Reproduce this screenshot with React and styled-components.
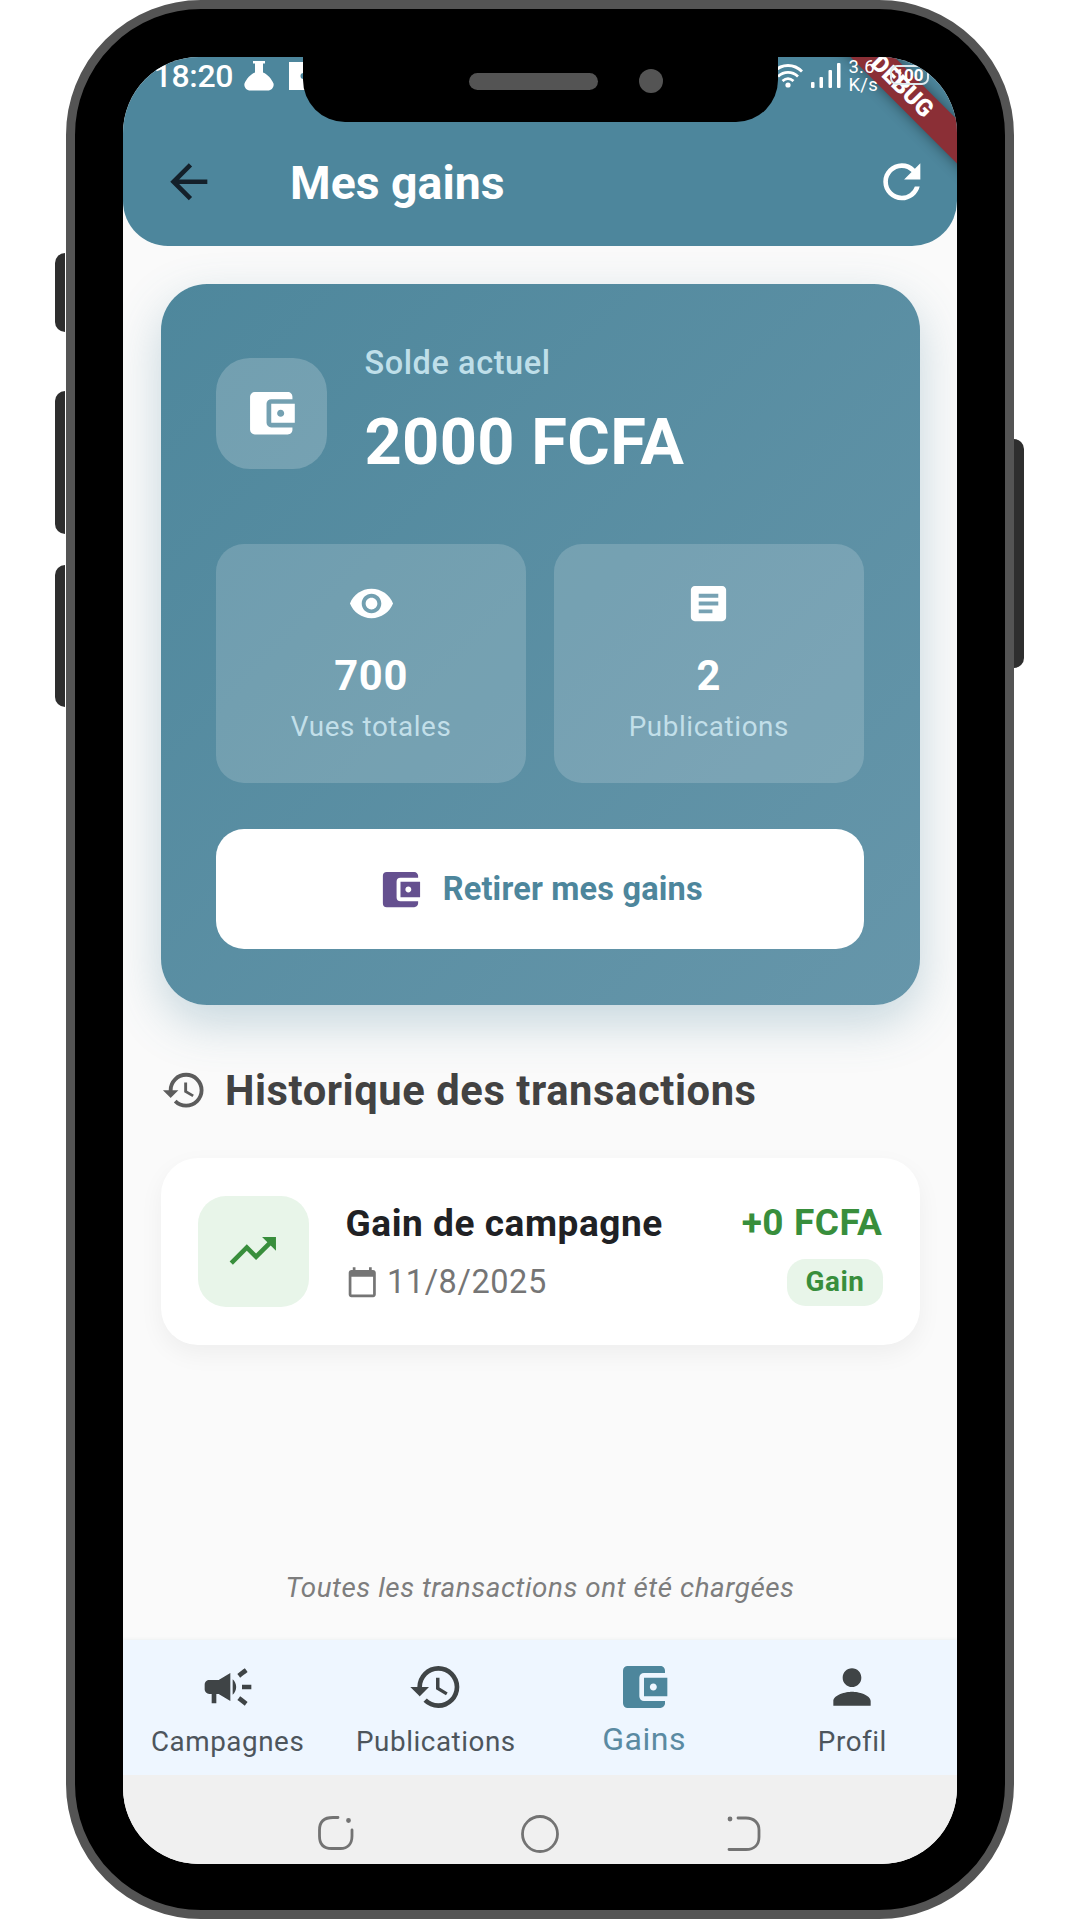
import React from "react";
import styled, { createGlobalStyle, css } from "styled-components";
import {
  MdAccountBalanceWallet,
  MdArrowBack,
  MdArticle,
  MdCalendarToday,
  MdCampaign,
  MdHistory,
  MdPerson,
  MdRefresh,
  MdTrendingUp,
  MdVisibility,
} from "react-icons/md";

const teal = "#4d869c";
const green = "#388e3c";
const mint = "#e8f5e9";

const GlobalStyle = createGlobalStyle`
  *, *::before, *::after { box-sizing: border-box; }
  body {
    margin: 0;
    background: #fff;
    font-family: Roboto, "Noto Sans", sans-serif;
    letter-spacing: 0.56px;
  }
  svg { display: block; flex: none; }
`;

const Page = styled.main`
  display: flex;
  justify-content: center;
  width: 1080px;
  height: 1920px;
  padding-right: 1px;
  overflow: hidden;
`;

const Phone = styled.div`
  position: relative;
  width: 948px;
  height: 1918.5px;
  padding: 47.5px 47px 45.5px 48px;
  border: 9.5px solid #545454;
  border-radius: 135px;
  background: #000;
`;

const SideKey = styled.span`
  position: absolute;
  top: ${(p) => p.$top}px;
  width: 10.5px;
  height: ${(p) => p.$height}px;
  background: #2e2e2e;
  ${(p) =>
    p.$side === "left"
      ? css`
          left: -20px;
          border-radius: 10px 0 0 10px;
        `
      : css`
          right: -19.5px;
          border-radius: 0 10px 10px 0;
        `}
`;

const Screen = styled.div`
  position: relative;
  display: flex;
  flex-direction: column;
  width: 834px;
  height: 1807px;
  border-radius: 76px;
  overflow: hidden;
  background: #fafafa;
`;

const Notch = styled.div`
  position: absolute;
  z-index: 3;
  top: -1px;
  left: 180px;
  display: flex;
  align-items: center;
  gap: 40.5px;
  width: 475px;
  height: 66.5px;
  padding: 0 0 15px 166px;
  border-radius: 0 0 42px 42px;
  background: #000;
`;

const Speaker = styled.span`
  width: 129.5px;
  height: 17px;
  border-radius: 9px;
  background: #545454;
`;

const Lens = styled.span`
  width: 24px;
  height: 24px;
  border-radius: 50%;
  background: #545454;
`;

const Header = styled.header`
  flex: none;
  height: 189px;
  border-radius: 0 0 45px 45px;
  background: ${teal};
`;

const StatusBar = styled.div`
  position: relative;
  z-index: 2;
  display: flex;
  justify-content: space-between;
  height: 60px;
  padding: 0 28px 0 31px;
  color: #fff;
`;

const StatusGroup = styled.div`
  display: flex;
  align-items: center;
  gap: ${(p) => p.$gap}px;
  height: 38px;
`;

const Clock = styled.span`
  margin-right: -4px;
  font-size: 32px;
  font-weight: 500;
  line-height: 38px;
  letter-spacing: -0.3px;
`;

const Speed = styled.span`
  width: 29px;
  margin-right: 4px;
  margin-top: 1px;
  font-size: 18.5px;
  line-height: 18.5px;
  letter-spacing: 0.2px;
  white-space: nowrap;
`;

const Battery = styled.span`
  display: flex;
  align-items: center;
  justify-content: center;
  width: 39px;
  height: 20px;
  margin-bottom: 2px;
  border: 2px solid #dce9ee;
  border-radius: 7px;
  font-size: 17px;
  font-weight: 700;
  letter-spacing: 0;
`;

const DebugBanner = styled.div`
  position: absolute;
  z-index: 1;
  top: 14px;
  left: 629px;
  width: 300px;
  height: 31px;
  transform: rotate(45deg);
  background: #8b2f36;
  box-shadow: 0 0 14px rgba(0, 0, 0, 0.45);
  color: #fff;
  font-size: 24px;
  font-weight: 900;
  line-height: 31px;
  letter-spacing: 0;
  text-align: center;
`;

const AppBar = styled.div`
  display: flex;
  align-items: center;
  height: 130px;
  padding: 0 27px 0 38px;
  color: #fff;
`;

const Title = styled.h1`
  flex: 1;
  margin: 2px 0 0 74px;
  font-size: 46.4px;
  font-weight: 700;
  line-height: 60px;
  letter-spacing: 0;
`;

const Content = styled.section`
  flex: 1;
  display: flex;
  flex-direction: column;
  padding: 38px 37px 0 38px;
`;

const BalanceCard = styled.section`
  display: flex;
  flex-direction: column;
  height: 721.5px;
  padding: 55.5px;
  border-radius: 46px;
  background: linear-gradient(135deg, #4e879c 0%, #6696aa 100%);
  box-shadow: 0 18px 48px rgba(77, 134, 156, 0.3);
  color: #fff;
`;

const BalanceRow = styled.div`
  display: flex;
  align-items: center;
  gap: 37.5px;
  height: 149px;
`;

const IconTile = styled.div`
  display: grid;
  place-items: center;
  flex: none;
  width: 111px;
  height: 111px;
  border-radius: ${(p) => p.$radius}px;
  background: ${(p) => p.$bg};
  color: ${(p) => p.$color};
`;

const Label = styled.div`
  padding-top: 1px;
  font-size: 32.5px;
  font-weight: 500;
  line-height: 46px;
  letter-spacing: 0.56px;
  color: #bfdfe9;
`;

const Amount = styled.div`
  margin-top: 10px;
  font-size: 65px;
  font-weight: 700;
  line-height: 92px;
  letter-spacing: 0.3px;
`;

const Stats = styled.div`
  display: grid;
  grid-template-columns: 1fr 1fr;
  gap: 27.5px;
  margin-top: 55.5px;
`;

const Stat = styled.div`
  display: flex;
  flex-direction: column;
  align-items: center;
  height: 239px;
  padding-top: 36.5px;
  border-radius: 28px;
  background: rgba(255, 255, 255, 0.17);
`;

const StatValue = styled.div`
  margin-top: 18.5px;
  font-size: 41.7px;
  font-weight: 700;
  line-height: 60px;
  letter-spacing: 0.6px;
`;

const StatLabel = styled.div`
  margin-top: 1px;
  font-size: 27.8px;
  line-height: 40px;
  letter-spacing: 0.6px;
  color: #c2dfe9;
`;

const Withdraw = styled.button`
  display: flex;
  align-items: center;
  justify-content: center;
  gap: 18.5px;
  height: 120.5px;
  margin-top: 46px;
  padding: 1px 0 0;
  border: 0;
  border-radius: 28px;
  background: #fff;
  color: ${teal};
  font: 700 32.5px/46px Roboto, sans-serif;
  letter-spacing: 0.18px;
  svg { color: #65508f; }
`;

const SectionTitle = styled.h2`
  display: flex;
  align-items: center;
  gap: 18px;
  height: 60px;
  margin: 55.5px 0 37.5px;
  color: #424242;
  font-size: 41.7px;
  font-weight: 700;
  line-height: 58px;
  letter-spacing: 0.58px;
  svg { color: #5c5c5c; }
`;

const Transaction = styled.article`
  display: flex;
  align-items: center;
  height: 186.5px;
  padding: 0 37px;
  border-radius: 37px;
  background: #fff;
  box-shadow: 0 9px 24px rgba(0, 0, 0, 0.05);
`;

const Details = styled.div`
  flex: 1;
  margin-left: 37px;
`;

const Name = styled.div`
  color: #202124;
  font-size: 37px;
  font-weight: 700;
  line-height: 56px;
`;

const DateLine = styled.div`
  display: flex;
  align-items: center;
  gap: 9px;
  margin-top: 6px;
  color: #757575;
  font-size: 32.5px;
  line-height: 48px;
`;

const Result = styled.div`
  display: flex;
  flex-direction: column;
  align-items: flex-end;
`;

const Gain = styled.div`
  margin-top: -2px;
  color: ${green};
  font-size: 37px;
  font-weight: 700;
  line-height: 56px;
`;

const Tag = styled.span`
  margin-top: 8.5px;
  padding: 0 18px;
  border-radius: 18.5px;
  background: ${mint};
  color: ${green};
  font-size: 27.8px;
  font-weight: 700;
  line-height: 46.5px;
`;

const EndNote = styled.p`
  margin: auto 0 31.5px;
  color: #7d7d7d;
  font-size: 27.8px;
  font-style: italic;
  line-height: 40px;
  text-align: center;
`;

const TabBar = styled.nav`
  display: grid;
  grid-template-columns: repeat(4, 1fr);
  flex: none;
  height: 135.5px;
  padding-left: 1px;
  background: #eef6ff;
  box-shadow: 0 -1px 3px rgba(90, 110, 130, 0.07);
`;

const Tab = styled.div`
  display: flex;
  flex-direction: column;
  align-items: center;
  padding-top: 19px;
  color: ${(p) => (p.$active ? teal : "#3f4446")};
`;

const TabLabel = styled.span`
  margin-top: ${(p) => (p.$active ? 3.5 : 6)}px;
  color: ${(p) => (p.$active ? "#5a8aa2" : "#4d555c")};
  font-size: ${(p) => (p.$active ? 32 : 27.8)}px;
  line-height: 42px;
`;

const SystemBar = styled.div`
  display: flex;
  justify-content: center;
  flex: none;
  gap: 163.5px;
  height: 88.5px;
  padding-top: 38.5px;
  background: #f0f0f0;
`;

const Flask = () => (
  <svg width="30" height="30" viewBox="0 0 30 30" fill="currentColor">
    <path d="M9 0h12v2.500h-2v9c5 2 8.500 6.500 10.500 11 .8 3-1.500 7-6 7h-17c-4.500 0-6.800-4-6-7C2.500 18 6 13.500 11 11.500v-9H9z" />
  </svg>
);

const Doc = () => (
  <svg width="28" height="28" viewBox="0 0 28 28">
    <path d="M0 0h28v28H0z" fill="currentColor" />
    <circle cx="14.500" cy="14" r="3" fill={teal} />
  </svg>
);

const Wifi = () => (
  <svg width="30" height="24" viewBox="0 0 30 24" fill="none" stroke="#fff" strokeWidth="2.800">
    <path d="M1 7.500C9-.5 21-.5 29 7.500M5 12.500c6-5.500 14-5.500 20 0M9.500 17c3.500-3 7.500-3 11 0" />
    <circle cx="15" cy="21" r="2.600" fill="#fff" stroke="none" />
  </svg>
);

const Signal = () => (
  <svg width="30" height="25" viewBox="0 0 30 25" fill="#fff">
    <rect x="0" y="19" width="3.500" height="6" rx="1" />
    <rect x="8.500" y="14" width="3.500" height="11" rx="1" />
    <rect x="17.500" y="7" width="3.500" height="18" rx="1" />
    <rect x="26" y="0" width="3.500" height="25" rx="1" />
  </svg>
);

const SysIcon = ({ children }) => (
  <svg width="40" height="40" viewBox="0 0 40 40" fill="none" stroke="#737373" strokeWidth="2.800" strokeLinecap="round">
    {children}
  </svg>
);

const tabs = [
  { label: "Campagnes", Icon: MdCampaign },
  { label: "Publications", Icon: MdHistory },
  { label: "Gains", Icon: MdAccountBalanceWallet, active: true },
  { label: "Profil", Icon: MdPerson },
];

const stats = [
  { label: "Vues totales", value: "700", Icon: MdVisibility },
  { label: "Publications", value: "2", Icon: MdArticle },
];

export default function App() {
  return (
    <Page>
      <GlobalStyle />
      <Phone>
        <SideKey $side="left" $top={244} $height={79} />
        <SideKey $side="left" $top={382} $height={142.5} />
        <SideKey $side="left" $top={555.5} $height={142.5} />
        <SideKey $side="right" $top={429.5} $height={229} />
        <Screen>
          <Notch>
            <Speaker />
            <Lens />
          </Notch>
          <DebugBanner>DEBUG</DebugBanner>
          <Header>
            <StatusBar>
              <StatusGroup $gap={15}>
                <Clock>18:20</Clock>
                <Flask />
                <Doc />
              </StatusGroup>
              <StatusGroup $gap={8}>
                <Wifi />
                <Signal />
                <Speed>
                  3.6
                  <br />
                  K/s
                </Speed>
                <Battery>100</Battery>
              </StatusGroup>
            </StatusBar>
            <AppBar>
              <MdArrowBack size={55.6} color="#14202a" />
              <Title>Mes gains</Title>
              <MdRefresh size={55.6} />
            </AppBar>
          </Header>
          <Content>
            <BalanceCard>
              <BalanceRow>
                <IconTile $radius={34} $bg="rgba(255,255,255,0.2)" $color="#fff">
                  <MdAccountBalanceWallet size={56.5} />
                </IconTile>
                <div>
                  <Label>Solde actuel</Label>
                  <Amount>2000 FCFA</Amount>
                </div>
              </BalanceRow>
              <Stats>
                {stats.map(({ label, value, Icon }) => (
                  <Stat key={label}>
                    <Icon size={47} />
                    <StatValue>{value}</StatValue>
                    <StatLabel>{label}</StatLabel>
                  </Stat>
                ))}
              </Stats>
              <Withdraw>
                <MdAccountBalanceWallet size={47} />
                Retirer mes gains
              </Withdraw>
            </BalanceCard>
            <SectionTitle>
              <MdHistory size={46.4} />
              Historique des transactions
            </SectionTitle>
            <Transaction>
              <IconTile $radius={28} $bg={mint} $color={green}>
                <MdTrendingUp size={55.6} />
              </IconTile>
              <Details>
                <Name>Gain de campagne</Name>
                <DateLine>
                  <MdCalendarToday size={32.5} />
                  11/8/2025
                </DateLine>
              </Details>
              <Result>
                <Gain>+0 FCFA</Gain>
                <Tag>Gain</Tag>
              </Result>
            </Transaction>
            <EndNote>Toutes les transactions ont été chargées</EndNote>
          </Content>
          <TabBar>
            {tabs.map(({ label, Icon, active }) => (
              <Tab key={label} $active={active}>
                <Icon size={56} />
                <TabLabel $active={active}>{label}</TabLabel>
              </Tab>
            ))}
          </TabBar>
          <SystemBar>
            <SysIcon>
              <path d="M22 3.500H17C8 3.500 3.500 8 3.500 16v6c0 8 4 12.500 12 12.500h9c7 0 11.500-4.500 11.500-12.500v-6" />
              <circle cx="32.500" cy="6.500" r="1" fill="#737373" />
            </SysIcon>
            <SysIcon>
              <circle cx="20" cy="20" r="17.500" />
            </SysIcon>
            <SysIcon>
              <path d="M15 4h8c8 0 13 5 13 12v7c0 8-5 12.500-13 12.500H6" />
              <circle cx="7" cy="5" r="1" fill="#737373" />
            </SysIcon>
          </SystemBar>
        </Screen>
      </Phone>
    </Page>
  );
}
